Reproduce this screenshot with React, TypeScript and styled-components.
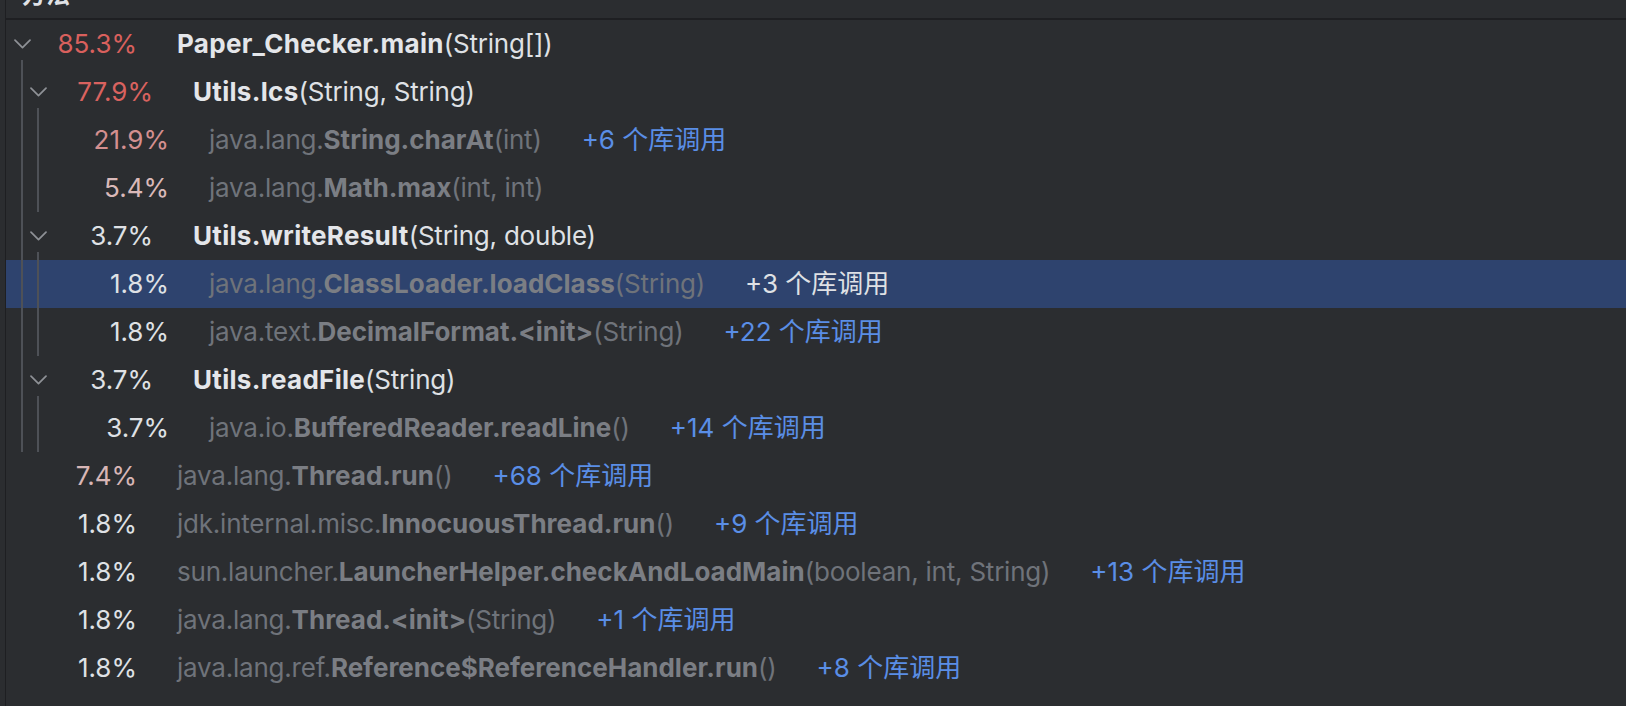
import React from "react";
import styled, { createGlobalStyle } from "styled-components";

const GlobalStyle = createGlobalStyle`
  html, body {
    margin: 0;
    padding: 0;
    background: #2b2d30;
  }
  body {
    font-family: Inter, "Noto Sans CJK SC", sans-serif;
    -webkit-font-smoothing: antialiased;
  }
`;

type Call = {
  level: number;
  pct: string;
  tone?: string;
  expanded?: boolean;
  own?: boolean;
  pkg?: string;
  method: string;
  args: string;
  lib?: number;
  selected?: boolean;
};

const calls: Call[] = [
  { level: 0, pct: "85.3%", tone: "#d9605d", expanded: true, own: true, method: "Paper_Checker.main", args: "(String[])" },
  { level: 1, pct: "77.9%", tone: "#d9625f", expanded: true, own: true, method: "Utils.lcs", args: "(String, String)" },
  { level: 2, pct: "21.9%", tone: "#d48f8f", pkg: "java.lang.", method: "String.charAt", args: "(int)", lib: 6 },
  { level: 2, pct: "5.4%", tone: "#dab9b9", pkg: "java.lang.", method: "Math.max", args: "(int, int)" },
  { level: 1, pct: "3.7%", expanded: true, own: true, method: "Utils.writeResult", args: "(String, double)" },
  { level: 2, pct: "1.8%", selected: true, pkg: "java.lang.", method: "ClassLoader.loadClass", args: "(String)", lib: 3 },
  { level: 2, pct: "1.8%", pkg: "java.text.", method: "DecimalFormat.<init>", args: "(String)", lib: 22 },
  { level: 1, pct: "3.7%", expanded: true, own: true, method: "Utils.readFile", args: "(String)" },
  { level: 2, pct: "3.7%", pkg: "java.io.", method: "BufferedReader.readLine", args: "()", lib: 14 },
  { level: 0, pct: "7.4%", tone: "#d8b6b6", pkg: "java.lang.", method: "Thread.run", args: "()", lib: 68 },
  { level: 0, pct: "1.8%", pkg: "jdk.internal.misc.", method: "InnocuousThread.run", args: "()", lib: 9 },
  { level: 0, pct: "1.8%", pkg: "sun.launcher.", method: "LauncherHelper.checkAndLoadMain", args: "(boolean, int, String)", lib: 13 },
  { level: 0, pct: "1.8%", pkg: "java.lang.", method: "Thread.<init>", args: "(String)", lib: 1 },
  { level: 0, pct: "1.8%", pkg: "java.lang.ref.", method: "Reference$ReferenceHandler.run", args: "()", lib: 8 },
];

const Chevron = () => (
  <svg width="17" height="10" viewBox="0 0 17 10" fill="none">
    <path d="M1 1.2 L8.5 8.6 L16 1.2" stroke="#8e9196" strokeWidth="1.7" strokeLinecap="round" strokeLinejoin="round" />
  </svg>
);

const CallRow: React.FC<{ call: Call }> = ({ call }) => {
  const guides = Array.from({ length: call.level });
  return (
    <Row selected={!!call.selected}>
      {guides.map((_, i) => (
        <Guide key={i} />
      ))}
      <Toggle open={!!call.expanded}>{call.expanded && <Chevron />}</Toggle>
      <Percent tone={call.tone || "#dfe1e5"}>{call.pct}</Percent>
      <Name own={!!call.own}>
        {call.pkg && <Pkg>{call.pkg}</Pkg>}
        <Method own={!!call.own}>{call.method}</Method>
        {call.args}
      </Name>
      {call.lib !== undefined && (
        <LibCalls selected={!!call.selected}>+{call.lib} 个库调用</LibCalls>
      )}
    </Row>
  );
};

const App = () => (
  <>
    <GlobalStyle />
    <Panel>
      <Header>
        <HeaderLabel>方法</HeaderLabel>
      </Header>
      <List>
        {calls.map((c, i) => (
          <CallRow key={i} call={c} />
        ))}
      </List>
    </Panel>
  </>
);

const Panel = styled.div`
  margin-left: 5px;
  border-left: 1px solid #1e1f22;
  height: 706px;
  box-sizing: border-box;
  overflow: hidden;
  background: #2b2d30;
`;

const Header = styled.div`
  height: 18px;
  border-bottom: 2px solid #1e1f22;
  overflow: hidden;
  padding-left: 16px;
`;

const HeaderLabel = styled.span`
  display: block;
  margin-top: -17px;
  font-size: 24px;
  line-height: 24px;
  font-weight: 600;
  color: #dfe1e5;
`;

const List = styled.div`
  display: flex;
  flex-direction: column;
`;

const Row = styled.div<{ selected: boolean }>`
  display: flex;
  align-items: stretch;
  height: 48px;
  padding-left: 1px;
  background: ${(p) => (p.selected ? "#2e436e" : "transparent")};
  font-size: 26px;
  line-height: 48px;
  white-space: nowrap;
`;

const Guide = styled.span`
  flex: none;
  width: 16px;
  background: linear-gradient(#4e5157, #4e5157) no-repeat 14px 0 / 2px 100%;
`;

const Toggle = styled.span<{ open: boolean }>`
  flex: none;
  width: 31px;
  display: flex;
  align-items: center;
  justify-content: center;
  background: ${(p) =>
    p.open
      ? "linear-gradient(#4e5157, #4e5157) no-repeat 14px 100% / 2px 8px"
      : "none"};
`;

const Percent = styled.span<{ tone: string }>`
  flex: none;
  width: 99px;
  text-align: right;
  color: ${(p) => p.tone};
`;

const Name = styled.span<{ own: boolean }>`
  margin-left: 40px;
  letter-spacing: -0.22px;
  color: ${(p) => (p.own ? "#dfe1e5" : "#6f737a")};
`;

const Pkg = styled.span`
  color: #6f737a;
`;

const Method = styled.span<{ own: boolean }>`
  font-weight: 700;
  letter-spacing: ${(p) => (p.own ? "0.3px" : "0")};
  color: ${(p) => (p.own ? "#e4e6ea" : "#7b7e84")};
`;

const LibCalls = styled.span<{ selected: boolean }>`
  margin-left: 40px;
  color: ${(p) => (p.selected ? "#dfe1e5" : "#5a8ee6")};
`;

export default App;
